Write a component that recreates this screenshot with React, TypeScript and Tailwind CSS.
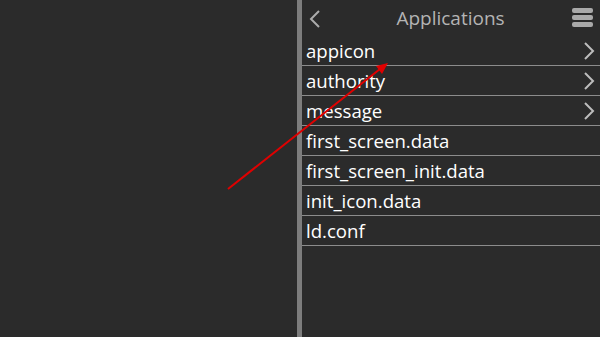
const entries = [
  { name: "appicon", folder: true },
  { name: "authority", folder: true },
  { name: "message", folder: true },
  { name: "first_screen.data", folder: false },
  { name: "first_screen_init.data", folder: false },
  { name: "init_icon.data", folder: false },
  { name: "ld.conf", folder: false },
];

function Chevron({ dir, className }: { dir: "left" | "right"; className?: string }) {
  return (
    <svg width="12" height="18" viewBox="0 0 12 18" className={className}>
      <path
        d={dir === "left" ? "M10 1 L2 9 L10 17" : "M2 1 L10 9 L2 17"}
        fill="none"
        stroke="currentColor"
        strokeWidth="2"
      />
    </svg>
  );
}

function MenuIcon() {
  return (
    <div className="flex w-[21px] flex-col gap-[2.5px]">
      <div className="h-[4.5px] rounded-[2px] bg-[#a9a9a9]" />
      <div className="h-[4.5px] rounded-[2px] bg-[#a9a9a9]" />
      <div className="h-[4.5px] rounded-[2px] bg-[#a9a9a9]" />
    </div>
  );
}

export default function App() {
  return (
    <div
      className="relative flex h-[337px] w-[600px] overflow-hidden bg-[#2b2b2b]"
      style={{ fontFamily: '"Open Sans", "Noto Sans", sans-serif' }}
    >
      <div className="w-[297px]" />
      <div className="w-[5px] bg-[#7d7d7d]" />
      <div className="flex flex-1 flex-col">
        <div className="flex h-[36px] items-center pl-[7px] pr-[7px]">
          <Chevron dir="left" className="mt-[1px] text-[#ababab]" />
          <div className="flex-1 pl-[8px] pt-[1px] text-center text-[19px] text-[#b4b4b4]">Applications</div>
          <div className="mt-[-1px]">
            <MenuIcon />
          </div>
        </div>
        {entries.map((e) => (
          <div
            key={e.name}
            className="flex h-[30px] items-center border-b border-[#8c8c8c] pl-[4px] pr-[5px]"
          >
            <span className="flex-1 pt-[1px] text-[18.6px] leading-none text-white">{e.name}</span>
            {e.folder && <Chevron dir="right" className="text-[#bdbdbd]" />}
          </div>
        ))}
      </div>

      {/* annotation arrow */}
      <svg className="absolute left-0 top-0" width="600" height="337">
        <line x1="228" y1="189" x2="380" y2="69" stroke="#e00000" strokeWidth="2" />
        <polygon points="388,63 376,66 382,74" fill="#e00000" />
      </svg>
    </div>
  );
}
